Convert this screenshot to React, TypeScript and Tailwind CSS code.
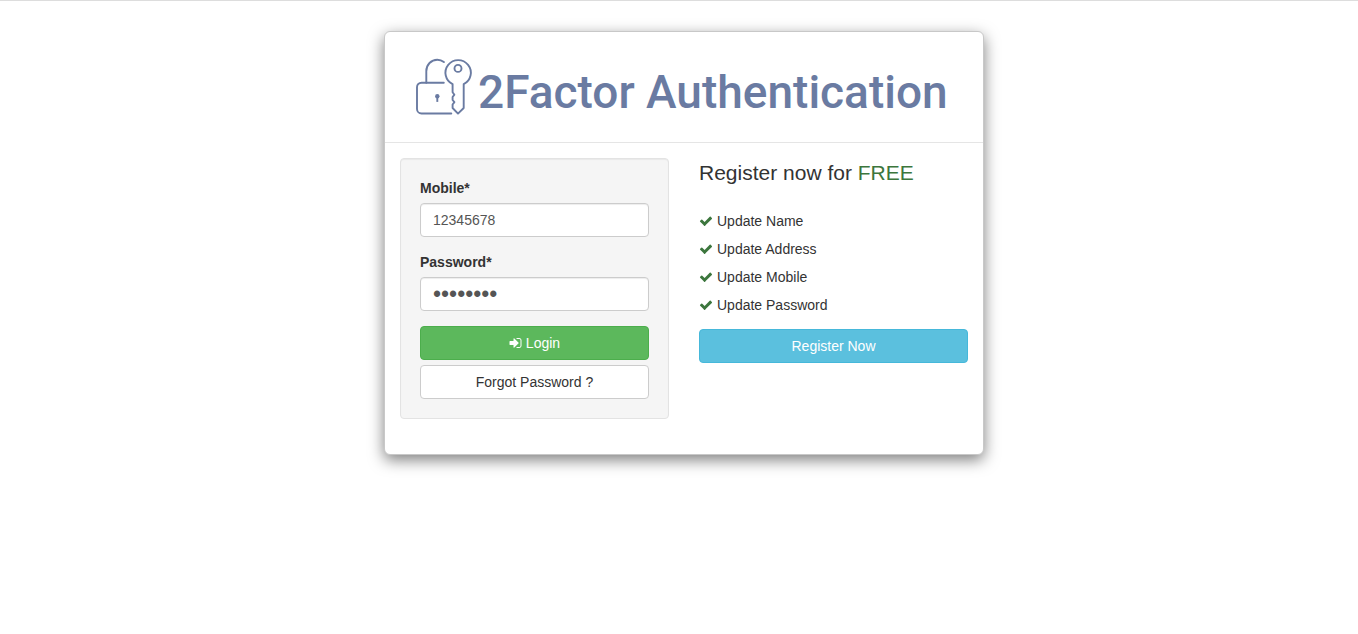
import { useState } from "react";
import type { FormEvent, InputHTMLAttributes } from "react";

const FEATURES = ["Update Name", "Update Address", "Update Mobile", "Update Password"];

function LockKeyIcon() {
  return (
    <svg
      className="h-[60px] w-[60px] shrink-0"
      viewBox="0 0 60 60"
      fill="none"
      stroke="currentColor"
      strokeWidth="1.9"
      strokeLinecap="round"
      strokeLinejoin="round"
      aria-hidden="true"
    >
      <path d="M28.8 25.7H6.5A4.5 4.5 0 0 0 2 30.2v21.8a4.5 4.5 0 0 0 4.5 4.5h29.8" />
      <path d="M11.3 25.7V14.2C11.3 7.6 16.2 2.8 22.3 2.8c2.7 0 4.7.8 6.6 2.3" />
      <path d="M37.6 27.2A12.7 12.7 0 1 1 48.7 27.2V51L43 56.6 37.6 51V47.5l1.8-2.4-1.8-2.1V40l1.8-2.3-1.8-2.4Z" />
      <circle cx="43" cy="11.4" r="3.5" />
      <circle cx="22.3" cy="39.2" r="2.2" fill="currentColor" stroke="none" />
      <path d="M22.3 39.5v5.4" strokeLinecap="butt" />
    </svg>
  );
}

function CheckIcon() {
  return (
    <svg className="h-[14px] w-[14px] shrink-0 text-[#3c763d]" viewBox="0 0 1792 1792" fill="currentColor" aria-hidden="true">
      <path d="M1671 566q0 40-28 68l-724 724-136 136q-28 28-68 28t-68-28l-136-136-362-362q-28-28-28-68t28-68l136-136q28-28 68-28t68 28l294 295 656-657q28-28 68-28t68 28l136 136q28 28 28 68z" />
    </svg>
  );
}

function SignInIcon() {
  return (
    <svg className="h-[14px] w-[13px] shrink-0" viewBox="64 64 1664 1664" fill="currentColor" aria-hidden="true">
      <path d="M1312 896q0 26-19 45l-544 544q-19 19-45 19t-45-19-19-45v-288h-448q-26 0-45-19t-19-45v-384q0-26 19-45t45-19h448v-288q0-26 19-45t45-19 45 19l544 544q19 19 19 45zm352-352v704q0 119-84.5 203.5t-203.5 84.5h-320q-13 0-22.5-9.5t-9.5-22.5q0-4-1-20t-.5-26.5 3-23.5 10-19.5 20.5-6.5h320q66 0 113-47t47-113v-704q0-66-47-113t-113-47h-312l-11.5-1-11.5-3-8-5.5-7-9-2-13.5q0-4-1-20t-.5-26.5 3-23.5 10-19.5 20.5-6.5h320q119 0 203.5 84.5t84.5 203.5z" />
    </svg>
  );
}

type FieldProps = InputHTMLAttributes<HTMLInputElement> & { id: string; label: string };

function Field({ id, label, ...input }: FieldProps) {
  return (
    <div className="mb-[15px]">
      <label htmlFor={id} className="mb-[5px] block font-bold">
        {label}*
      </label>
      <input
        id={id}
        required
        className={`block h-[34px] w-full rounded border border-[#ccc] bg-white px-3 text-[#555] shadow-[inset_0_1px_1px_rgba(0,0,0,0.075)] outline-none focus:border-[#66afe9] ${
          input.type === "password" ? "text-[23px]" : "text-[14px]"
        }`}
        {...input}
      />
    </div>
  );
}

export default function App() {
  const [mobile, setMobile] = useState("12345678");
  const [password, setPassword] = useState("12345678");

  return (
    <div className="border-t border-[#ddd] pb-[30px] pl-[10px] pt-[30px] font-['Liberation_Sans',Arial,sans-serif] text-[14px] leading-5 text-[#333]">
      <main className="mx-auto max-w-[600px] rounded-md border border-[#c8c8c8] bg-white shadow-[0_5px_15px_rgba(0,0,0,0.5)]">
        <header className="border-b border-[#e5e5e5] px-[30px] py-[25px]">
          <h1 className="flex items-end gap-[3px] whitespace-nowrap font-['Roboto',sans-serif] text-[46px] font-medium leading-[50px] text-[#6a7ba2]">
            <LockKeyIcon />
            2Factor Authentication
          </h1>
        </header>

        <div className="grid gap-[30px] p-[15px] sm:grid-cols-2">
          <form
            onSubmit={(e: FormEvent) => e.preventDefault()}
            className="mb-5 rounded border border-[#e3e3e3] bg-[#f5f5f5] p-[19px] shadow-[inset_0_1px_1px_rgba(0,0,0,0.05)]"
          >
            <Field id="mobile" label="Mobile" type="text" value={mobile} onChange={(e) => setMobile(e.target.value)} />
            <Field id="password" label="Password" type="password" value={password} onChange={(e) => setPassword(e.target.value)} />
            <button
              type="submit"
              className="flex h-[34px] w-full items-center justify-center gap-1 rounded border border-[#4cae4c] bg-[#5cb85c] text-white hover:bg-[#449d44]"
            >
              <SignInIcon />
              Login
            </button>
            <a
              href="#forgot"
              className="mt-[5px] flex h-[34px] items-center justify-center rounded border border-[#ccc] bg-white hover:bg-[#e6e6e6]"
            >
              Forgot Password ?
            </a>
          </form>

          <section>
            <h2 className="mb-5 text-[21px] leading-[29px]">
              Register now for <span className="text-[#3c763d]">FREE</span>
            </h2>
            <ul className="mb-[10px] leading-7">
              {FEATURES.map((feature) => (
                <li key={feature} className="flex items-center gap-1">
                  <CheckIcon />
                  {feature}
                </li>
              ))}
            </ul>
            <a
              href="#register"
              className="flex h-[34px] items-center justify-center rounded border border-[#46b8da] bg-[#5bc0de] text-white hover:bg-[#31b0d5]"
            >
              Register Now
            </a>
          </section>
        </div>
      </main>
    </div>
  );
}
